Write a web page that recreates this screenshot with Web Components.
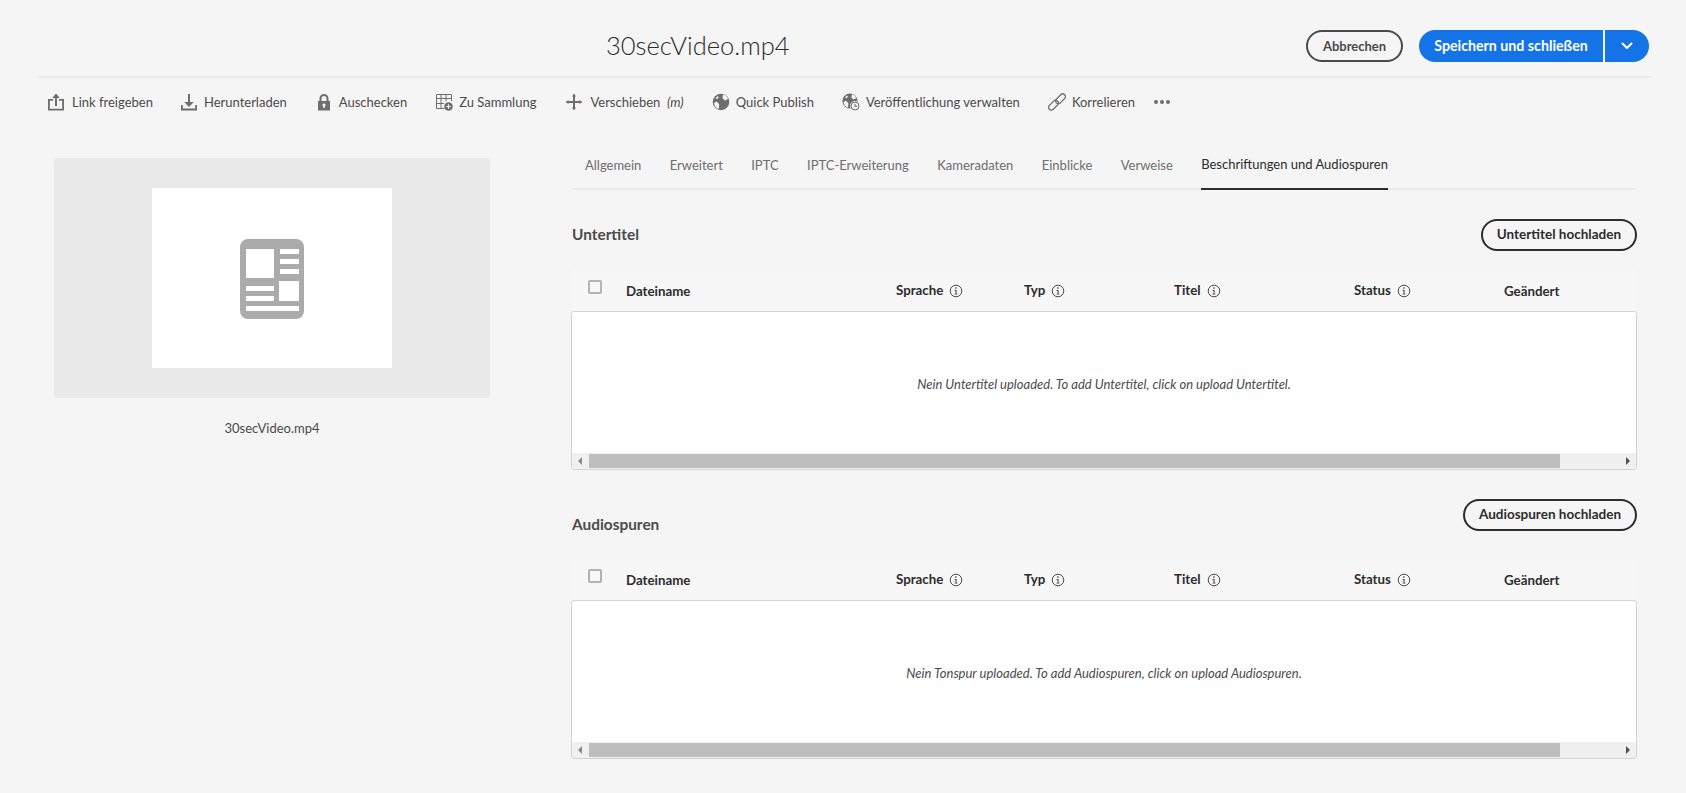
<!DOCTYPE html>
<html lang="de">
<head>
<meta charset="utf-8">
<title>30secVideo.mp4</title>
<style>
  html, body { margin: 0; background: #f5f5f5; }
  body { font-family: "Lato", "Noto Sans", sans-serif; color: #4b4b4b; }
</style>
</head>
<body>
<asset-page></asset-page>

<template id="pill-tpl">
  <style>
    :host { display: inline-flex; }
    button {
      box-sizing: border-box; height: 32px; padding: 0 14px; border: 2px solid #2c2c2c; border-radius: 16px;
      background: transparent; color: #2c2c2c; font: 700 13.5px/1 "Lato", sans-serif; white-space: nowrap;
    }
    :host([muted]) button { border-color: #4b4b4b; color: #4b4b4b; font-size: 13px; width: 97px; padding: 0; }
  </style>
  <button><slot></slot></button>
</template>

<template id="header-tpl">
  <style>
    :host { display: block; margin: 0 35px 0 38px; border-bottom: 2px solid #eaeaea; height: 78px; box-sizing: border-box; }
    .row { display: flex; align-items: center; height: 76px; padding-top: 16px; box-sizing: border-box; }
    h1 { margin: 0 0 0 568px; flex: 1; font: 300 25.5px/1 "Lato", sans-serif; color: #2c2c2c; }
    .actions { display: flex; align-items: center; gap: 16px; padding-right: 2px; }
    .split { display: flex; height: 32px; color: #fff; font: 700 14.2px/32px "Lato", sans-serif; white-space: nowrap; }
    .save { background: #1473e6; border-radius: 16px 0 0 16px; width: 184px; box-sizing: border-box; text-align: center; }
    .more { background: #1473e6; margin-left: 2px; width: 44px; border-radius: 0 16px 16px 0; display: flex; align-items: center; justify-content: center; }
  </style>
  <div class="row">
    <h1><slot></slot></h1>
    <div class="actions">
      <pill-button muted>Abbrechen</pill-button>
      <div class="split">
        <div class="save">Speichern und schließen</div>
        <div class="more"><svg width="12" height="8" viewBox="0 0 12 8"><path d="M1.500 1.500 6 6l4.500-4.500" fill="none" stroke="#fff" stroke-width="2" stroke-linecap="round" stroke-linejoin="round"/></svg></div>
      </div>
    </div>
  </div>
</template>

<template id="toolbar-tpl">
  <style>
    :host { display: flex; align-items: center; height: 48px; padding-left: 47px; font: 400 13px/1 "Lato", sans-serif; color: #4b4b4b; }
    .dots { margin-left: -9px; display: flex; gap: 2px; }
    .dots i { width: 4px; height: 4px; border-radius: 50%; background: #6e6e6e; }
  </style>
  <slot></slot>
  <div class="dots"><i></i><i></i><i></i></div>
</template>

<template id="tool-tpl">
  <style>
    :host { display: inline-flex; align-items: center; gap: 6px; margin-right: 28px; white-space: nowrap; }
    ::slotted(svg) { width: 18px; height: 18px; fill: #6e6e6e; flex: none; }
    em { font-style: italic; }
  </style>
  <slot name="icon"></slot><span><slot></slot></span>
</template>

<template id="preview-tpl">
  <style>
    :host { display: block; width: 436px; flex: none; margin-left: 54px; }
    .stage { height: 240px; background: #e9e9e9; border-radius: 4px; display: flex; align-items: center; justify-content: center; }
    .paper { width: 240px; height: 180px; padding-top: 1px; box-sizing: border-box; background: #fff; display: flex; align-items: center; justify-content: center; }
    .name { margin-top: 21px; text-align: center; font: 400 13px/18px "Lato", sans-serif; color: #4b4b4b; }
  </style>
  <div class="stage">
    <div class="paper">
      <svg width="64" height="80" viewBox="0 0 64 80">
        <path fill="#ababab" fill-rule="evenodd" d="M8 0h48a8 8 0 0 1 8 8v64a8 8 0 0 1-8 8H8a8 8 0 0 1-8-8V8a8 8 0 0 1 8-8zM6 10v29h28V10zm34 0v5h19v-5zm0 10v5h19v-5zm0 10v5h19v-5zM39 42v20h20V42zM6 47v5h28v-5zm0 10v5h28v-5zm0 10v5h53v-5z"/>
      </svg>
    </div>
  </div>
  <div class="name"><slot></slot></div>
</template>

<template id="tabs-tpl">
  <style>
    :host { display: flex; height: 40px; box-sizing: border-box; border-bottom: 2px solid #eaeaea; padding-left: 14px; gap: 28.4px; font: 400 13px/1 "Lato", sans-serif; color: #6e6e6e; }
  </style>
  <slot></slot>
</template>

<template id="tab-tpl">
  <style>
    :host { display: flex; align-items: center; height: 40px; padding-bottom: 10px; box-sizing: border-box; white-space: nowrap; }
    :host([selected]) { color: #2c2c2c; border-bottom: 2px solid #2c2c2c; }
  </style>
  <slot></slot>
</template>

<template id="track-tpl">
  <style>
    :host { display: block; margin-top: 29px; }
    .top { display: flex; justify-content: space-between; align-items: center; height: 32px; }
    h2 { margin: 0 0 0 1px; font: 700 15.4px/1 "Lato", sans-serif; color: #4b4b4b; }
    :host([low]) .top { height: 41px; align-items: flex-start; }
    :host([low]) h2 { margin-top: 18px; }
    .head { display: grid; grid-template-columns: 54px 270px 128px 150px 180px 150px 1fr; align-items: center; height: 41px; margin: 19px 1px 0; background: #f7f7f7; font: 700 13.3px/1 "Lato", sans-serif; color: #2c2c2c; }
    .head span { display: flex; align-items: center; gap: 6px; }
    .head span:nth-child(2), .head span:last-child { margin-top: 2px; }
    .check { box-sizing: border-box; width: 14px; height: 14px; margin: -7px 0 0 16px; border: 2px solid #b3b3b3; border-radius: 2px; }
    .body { box-sizing: border-box; height: 159px; background: #fff; border: 1px solid #d3d3d3; border-radius: 3px; display: flex; flex-direction: column; overflow: hidden; }
    .msg { flex: 1; display: flex; align-items: center; justify-content: center; padding-top: 4px; font: italic 400 13px/1 "Lato", sans-serif; color: #4b4b4b; }
    .bar { height: 16px; background: #f0f0f0; display: flex; align-items: center; }
    .thumb { height: 14px; margin-left: 7px; width: 971px; background: #bebebe; }
    .arrow { width: 0; height: 0; border-top: 4px solid transparent; border-bottom: 4px solid transparent; }
    .left { border-right: 4px solid #8a8a8a; margin-left: 6px; }
    .right { border-left: 4px solid #505050; margin-left: 66px; }
  </style>
  <div class="top"><h2></h2><pill-button></pill-button></div>
  <div class="head"></div>
  <div class="body">
    <div class="msg"></div>
    <div class="bar"><i class="arrow left"></i><div class="thumb"></div><i class="arrow right"></i></div>
  </div>
</template>

<template id="page-tpl">
  <style>
    :host { display: block; }
    .main { display: flex; margin-top: 32px; }
    .side { margin: -8px 0 0 81px; width: 1066px; }
    .wide { margin-right: 27px; --extra: 1px; }
  </style>
  <asset-header>30secVideo.mp4</asset-header>
  <tool-bar>
    <tool-item class="wide"><svg slot="icon" viewBox="0 0 18 18" style="margin-right:1px"><path d="M9 .5 12.800 5H10v8H8V5H5.200z"/><path d="M6 6H1v11.500h16V6h-5v1.800h3.200v7.900H2.800V7.800H6z"/></svg>Link freigeben</tool-item>
    <tool-item><svg slot="icon" viewBox="0 0 18 18"><path d="M8 1h2v8h3.800L9 14 4.200 9H8z"/><path d="M1 12h1.800v3.500h12.400V12H17v5.500H1z"/></svg>Herunterladen</tool-item>
    <tool-item><svg slot="icon" viewBox="0 0 18 18"><path fill-rule="evenodd" d="M9 1a4.500 4.500 0 0 1 4.500 4.500V8H15v9.500H3V8h1.500V5.500A4.500 4.500 0 0 1 9 1zm0 2a2.500 2.500 0 0 0-2.500 2.500V8h5V5.500A2.500 2.500 0 0 0 9 3zM9 10.500a1.500 1.500 0 0 0-.8 2.800V15h1.600v-1.700A1.500 1.500 0 0 0 9 10.500z"/></svg>Auschecken</tool-item>
    <tool-item><svg slot="icon" viewBox="0 0 18 18"><path d="M9.500 15.500h-8v-14h15V8M1.500 5.500h15M1.500 10.500h7.500M6 1.500v14M11 1.500V8" fill="none" stroke="#6e6e6e"/><circle cx="13.500" cy="13.500" r="4.300" fill="#6e6e6e"/><path d="M12.900 11.200h1.200v1.700h1.700v1.200h-1.700v1.700h-1.200v-1.700h-1.700v-1.200h1.700z" fill="#f5f5f5"/></svg>Zu Sammlung</tool-item>
    <tool-item><svg slot="icon" viewBox="0 0 18 18" style="margin:0 1px"><path d="M9 .5 11 3.500H10V8h4.500V7L17.500 9 14.500 11V10H10v4.500h1L9 17.500 7 14.500h1V10H3.500v1L.5 9 3.500 7v1H8V3.500H7z"/></svg><span>Verschieben&nbsp; <em>(m)</em></span></tool-item>
    <tool-item><svg slot="icon" viewBox="0 0 18 18"><circle cx="9" cy="9" r="8.300"/><path d="M2 10 4.800 8.600l2.400 2.600-.5 4.800Q2.600 15 2 10zM11 1.500Q14.800 2.400 16 6l-3.200 1.400L10.500 5zM5.500 3 6.800 4.500 5 6 3.600 5.400z" fill="#f5f5f5"/></svg>Quick Publish</tool-item>
    <tool-item><svg slot="icon" viewBox="0 0 18 18"><circle cx="8" cy="8" r="7.600"/><path d="M1.500 9 4 7.800l2.400 2.400-.4 4.400Q2 13.500 1.500 9zM10 1.300Q13 2 14.400 5L11.500 6.500 9.400 4.500zM4.800 2.600 6 4 4.400 5.300 3.200 4.800z" fill="#f5f5f5"/><circle cx="13" cy="13" r="5" fill="#f5f5f5"/><circle cx="13" cy="13" r="4" fill="none" stroke="#6e6e6e"/><path d="M12.500 10.800h1v2h1.800v1h-2.800z"/></svg>Veröffentlichung verwalten</tool-item>
    <tool-item><svg slot="icon" viewBox="0 0 18 18"><g transform="rotate(-45 9 9)" fill="none" stroke="#6e6e6e" stroke-width="1.300"><rect x="-1.500" y="6" width="11.500" height="5.500" rx="2.750"/><rect x="8" y="6.500" width="11.500" height="5.500" rx="2.750"/></g></svg>Korrelieren</tool-item>
  </tool-bar>
  <div class="main">
    <asset-preview>30secVideo.mp4</asset-preview>
    <div class="side">
      <tab-bar>
        <tab-item>Allgemein</tab-item>
        <tab-item>Erweitert</tab-item>
        <tab-item>IPTC</tab-item>
        <tab-item>IPTC-Erweiterung</tab-item>
        <tab-item>Kameradaten</tab-item>
        <tab-item>Einblicke</tab-item>
        <tab-item>Verweise</tab-item>
        <tab-item selected>Beschriftungen und Audiospuren</tab-item>
      </tab-bar>
      <track-section heading="Untertitel" action="Untertitel hochladen" message="Nein Untertitel uploaded. To add Untertitel, click on upload Untertitel."></track-section>
      <track-section low heading="Audiospuren" action="Audiospuren hochladen" message="Nein Tonspur uploaded. To add Audiospuren, click on upload Audiospuren."></track-section>
    </div>
  </div>
</template>

<script>
(() => {
  const simple = (tag, id) => customElements.define(tag, class extends HTMLElement {
    constructor() {
      super();
      this.attachShadow({ mode: 'open' }).appendChild(document.getElementById(id).content.cloneNode(true));
    }
  });

  simple('pill-button', 'pill-tpl');
  simple('asset-header', 'header-tpl');
  simple('tool-bar', 'toolbar-tpl');
  simple('tool-item', 'tool-tpl');
  simple('asset-preview', 'preview-tpl');
  simple('tab-bar', 'tabs-tpl');
  simple('tab-item', 'tab-tpl');
  simple('asset-page', 'page-tpl');

  const INFO = '<svg width="14" height="14" viewBox="0 0 14 14"><circle cx="7" cy="7" r="5.800" fill="none" stroke="#4b4b4b"/><path d="M6.200 3.300h1.400v1.500H6.200zM5.600 6h2v3.700h.9v.9H5.500v-.9h1V6.900h-.9z" fill="#4b4b4b"/></svg>';
  const COLS = [['Dateiname', false], ['Sprache', true], ['Typ', true], ['Titel', true], ['Status', true], ['Geändert', false]];

  class TrackSection extends HTMLElement {
    constructor() {
      super();
      this.attachShadow({ mode: 'open' }).appendChild(document.getElementById('track-tpl').content.cloneNode(true));
    }
    connectedCallback() {
      const root = this.shadowRoot;
      root.querySelector('h2').textContent = this.getAttribute('heading');
      root.querySelector('pill-button').textContent = this.getAttribute('action');
      root.querySelector('.msg').textContent = this.getAttribute('message');
      root.querySelector('.head').innerHTML = '<div class="check"></div>' +
        COLS.map(([t, i]) => `<span>${t}${i ? INFO : ''}</span>`).join('');
    }
  }
  customElements.define('track-section', TrackSection);
})();
</script>
</body>
</html>
